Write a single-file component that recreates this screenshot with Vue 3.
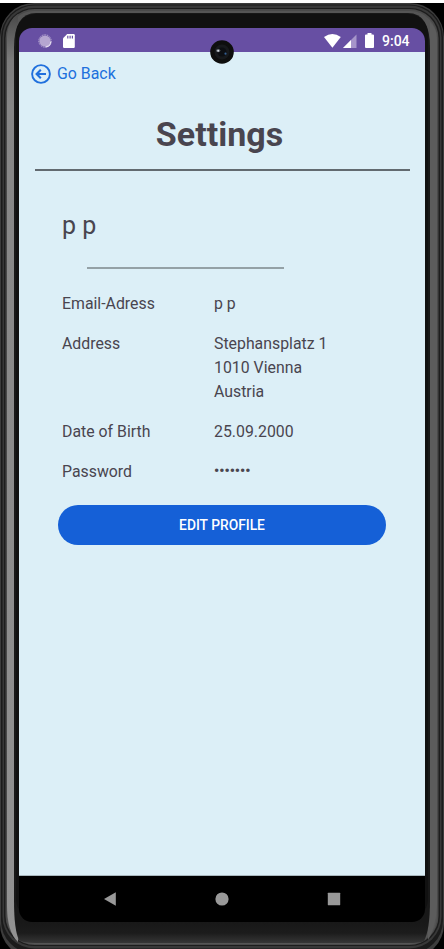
<script setup>
const rows = [
  { label: 'Email-Adress', lines: ['p p'] },
  { label: 'Address', lines: ['Stephansplatz 1', '1010 Vienna', 'Austria'] },
  { label: 'Date of Birth', lines: ['25.09.2000'] },
  { label: 'Password', lines: ['•••••••'], secret: true },
]
</script>

<template>
  <div class="stage">
    <div class="phone">
      <svg class="shell" width="444" height="946" viewBox="0 3 444 946">
        <defs>
          <linearGradient id="railL" gradientUnits="userSpaceOnUse" x1="0" y1="14" x2="0" y2="940">
            <stop offset="0" stop-color="#484848" />
            <stop offset=".05" stop-color="#7c7c7c" />
            <stop offset=".1" stop-color="#868686" />
            <stop offset="1" stop-color="#929292" />
          </linearGradient>
          <linearGradient id="chin" gradientUnits="userSpaceOnUse" x1="0" y1="922" x2="0" y2="944">
            <stop offset="0" stop-color="#181818" />
            <stop offset=".5" stop-color="#1c1c1c" />
            <stop offset="1" stop-color="#393939" />
          </linearGradient>
        </defs>
        <rect x="0" y="3" width="444" height="946" fill="#000" />
        <rect x="0" y="3" width="444" height="955" rx="34" fill="#3c3c3c" />
        <rect x="1" y="4.5" width="442" height="949" rx="33" fill="#1b1b1b" />
        <rect x="2.5" y="5.5" width="439" height="943" rx="32" fill="#383838" />
        <rect x="4" y="8" width="436" height="938" rx="30" fill="#1d1d1d" />
        <rect x="5.5" y="9" width="433" height="936" rx="29" fill="#4a4a4a" />
        <rect x="7" y="11" width="430" height="933" rx="27" fill="#555" />
        <path d="M7 905V38Q8 20 18 14V942Q7 932 7 905Z" fill="url(#railL)" />
        <path d="M430 22Q437 28 437 40V905Q436 928 428 940Z" fill="#5c5c5c" />
        <path d="M14 900V48Q14 13 36 13H408Q430 13 430 48V900Q430 930 424 941Q420 943 408 943H36Q22 943 19 940Q14 930 14 900Z" fill="url(#chin)" />
        <rect x="16" y="14" width="412" height="905" rx="20" fill="#111" />
      </svg>

      <div class="screen">
        <header class="status">
          <svg class="busy" width="14" height="14" viewBox="0 0 14 14">
            <circle cx="7" cy="7" r="5.6" fill="#b5a5d0" />
            <path d="M12.9 7.5A5.9 5.9 0 0 1 7.5 12.9" fill="none" stroke="#eee8f5" stroke-width="1.3" />
            <circle cx="7" cy="7" r="6.2" fill="none" stroke="#c4b7da" stroke-width="1" stroke-dasharray="1 .8" />
          </svg>
          <svg class="card" width="12" height="14" viewBox="0 0 12 14">
            <path d="M4.2 0H10.6Q11.8 0 11.8 1.2V12.8Q11.8 14 10.6 14H1.2Q0 14 0 12.8V4.3Z" fill="#fff" />
            <path d="M4.8 1.7V4.4M7.1 1.7V4.4M9.4 1.7V4.4" stroke="#674fa3" stroke-width="1.2" />
          </svg>
          <svg class="wifi" width="17" height="14" viewBox="0 0 17 14">
            <path d="M0 3Q8.4-3 16.8 3L8.4 13.7Z" fill="#fff" />
          </svg>
          <svg class="signal" width="14" height="14" viewBox="0 0 14 14">
            <path d="M0 14L13.5 .5V14Z" fill="#a695ca" />
            <path d="M0 14L8 6V14Z" fill="#fff" />
          </svg>
          <svg class="battery" width="9" height="15" viewBox="0 0 9 15">
            <path d="M2.5 0H6.5V1.4H8Q9 1.4 9 2.4V14Q9 15 8 15H1Q0 15 0 14V2.4Q0 1.4 1 1.4H2.5Z" fill="#fff" />
          </svg>
          <span class="clock">9:04</span>
        </header>

        <main class="content">
          <a class="back">
            <svg width="20" height="20" viewBox="0 0 20 20" fill="none" stroke="#2070dd" stroke-width="1.9">
              <circle cx="10" cy="10" r="8.9" />
              <path d="M15 10H6M9.8 5.7L5.6 10L9.8 14.3" stroke-width="2.1" />
            </svg>
            <span>Go Back</span>
          </a>
          <h1>Settings</h1>
          <div class="rule"></div>
          <h2>p p</h2>
          <div class="subrule"></div>
          <dl>
            <div v-for="row in rows" :key="row.label" class="row">
              <dt>{{ row.label }}</dt>
              <dd :class="{ secret: row.secret }">
                <div v-for="line in row.lines" :key="line">{{ line }}</div>
              </dd>
            </div>
          </dl>
          <button type="button">EDIT PROFILE</button>
        </main>

        <nav>
          <svg width="14" height="14" viewBox="0 0 14 14"><path d="M12.8 .3V13.7L1 7Z" fill="#999" /></svg>
          <svg width="14" height="14" viewBox="0 0 14 14"><circle cx="7" cy="7" r="6.6" fill="#999" /></svg>
          <svg width="14" height="14" viewBox="0 0 14 14"><rect x=".8" y=".8" width="12.4" height="12.4" rx=".5" fill="#999" /></svg>
        </nav>
      </div>

      <svg class="camera" width="24" height="24" viewBox="0 0 24 24">
        <circle cx="12" cy="12" r="11.8" fill="#0e0e0e" />
        <circle cx="12" cy="12" r="7.5" fill="#17191c" />
        <circle cx="12" cy="12" r="4.5" fill="#0c0e12" />
        <ellipse cx="8.2" cy="10.6" rx="2.2" ry="1.7" fill="#5d6269" />
        <circle cx="8.2" cy="10.8" r="1" fill="#d5dbe2" />
        <circle cx="15.5" cy="13.7" r="1.1" fill="#345f91" />
      </svg>
    </div>
  </div>
</template>

<style>
body { background: #fff; }
</style>

<style scoped>
.stage { width: 444px; height: 949px; padding-top: 3px; box-sizing: border-box; overflow: hidden; font-family: Roboto, sans-serif; color: #49454f; }
.phone { position: relative; height: 946px; padding: 25px 19px; box-sizing: border-box; }
.shell { position: absolute; left: 0; top: 0; }
.screen { position: relative; width: 406px; height: 894px; border-radius: 13px; overflow: hidden; display: flex; flex-direction: column; background: #000; }
.status { height: 24px; flex: none; background: #674fa3; display: flex; align-items: center; box-sizing: border-box; padding: 1px 16px 0 19px; }
.card { margin-left: 11px; }
.wifi { margin-left: auto; }
.signal { margin-left: 2px; }
.battery { margin-left: 8px; }
.clock { margin-left: 8px; color: #fff; font-size: 14px; line-height: 20px; font-weight: 500; width: 27px; white-space: nowrap; }
.content { height: 824px; flex: none; box-sizing: border-box; background: #dceff7; display: flex; flex-direction: column; align-items: flex-start; border-bottom: 1px solid #a9b8be; }
.back { display: flex; align-items: center; gap: 6px; margin: 12px 0 0 12px; height: 20px; color: #2070dd; font-size: 15.9px; line-height: 20px; }
h1 { margin: 30px 0 0; width: 401px; text-align: center; font-size: 34px; line-height: 40px; font-weight: 700; }
.rule { margin: 15px 0 0 16px; width: 375px; height: 2px; background: #626a70; }
h2 { margin: 40px 0 0 43px; font-size: 25px; line-height: 30px; font-weight: 400; }
.subrule { margin: 26px 0 0 68px; width: 197px; height: 1.5px; background: #94a1a6; }
dl { margin: 23.4px 0 0 43px; display: flex; flex-direction: column; gap: 15.6px; font-size: 15.85px; line-height: 24.3px; }
.row { display: grid; grid-template-columns: 152px 160px; }
dt, dd { margin: 0; }
.secret { font-weight: 700; font-size: 14.5px; }
button { margin: 20.1px 0 0 39px; width: 328px; height: 40px; border: 0; border-radius: 20px; background: #1560d7; color: #fff; font: 500 13.8px Roboto, sans-serif; padding: 0; }
nav { height: 46px; flex: none; display: flex; justify-content: center; align-items: center; gap: 98px; }
.camera { position: absolute; left: 210px; top: 37px; }
</style>
